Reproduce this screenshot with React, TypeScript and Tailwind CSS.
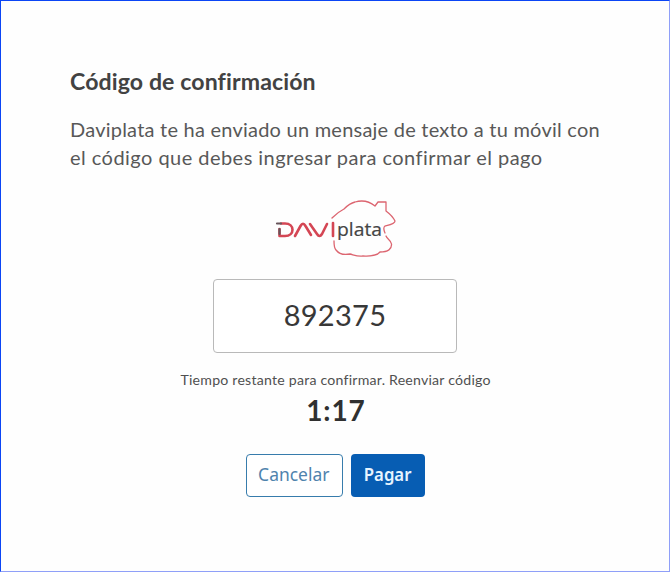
import React, { useState } from 'react';

const DaviplataLogo: React.FC = () => (
  <svg width="122" height="60" viewBox="274 199 122 60" fill="none" role="img" aria-label="Daviplata">
    {/* House outline */}
    <g stroke="#dc6570" strokeWidth="1.3" strokeLinejoin="round" strokeLinecap="round">
      <path d="M332 218C336 214 340 211 344 209C348 205 351 203 355 202C362 200 369 201 375 206L378 202H386V211C390 214 393 217 395 221C395 224 389 225 385 226C383 227 384 231 385 233" />
      <path d="M386 236C387 239 391 240 391.500 244C392 249 388 252 380 252C376 257 368 256 363 256C358 257 354 255 350 254C345 255 339 254 336 250C334 248 334 245 334 241" />
    </g>
    {/* DAVI strokes */}
    <g stroke="#d44654" strokeWidth="2.6" strokeLinecap="round" strokeLinejoin="round">
      <path d="M281 223.5H285C295 223.5 295 236 285 236H279.500V229" />
      <path d="M295 236L300.500 226Q303 221.500 305.500 226L311 235" />
      <path d="M310 224L317 234Q319.500 238 322 234L327 224" />
      <path d="M333 223V236" />
    </g>
    <path d="M277 223.5H281M279.500 229V234" stroke="#67545a" strokeWidth="2.2" strokeLinecap="round" />
    <text x="337" y="236" fill="#454545" stroke="#454545" strokeWidth="0.2" fontSize="19" textLength="45" lengthAdjust="spacingAndGlyphs" fontFamily="'Open Sans', sans-serif">
      plata
    </text>
  </svg>
);

const App: React.FC = () => {
  const [code, setCode] = useState('892375');

  return (
    <main className="h-[572px] w-[670px] overflow-hidden border border-t-[#0b45f5] border-l-[#0b45f5] border-r-[#8f9ff8] border-b-[#8f9ff8] bg-[#fefefe] pt-[67px] font-['Lato',sans-serif] text-[#424242]">
      <div className="pl-[69px]">
        <h1 className="origin-left scale-x-[1.05] whitespace-nowrap text-[22px] leading-[28px] font-bold tracking-[0.1px]">Código de confirmación</h1>
        <p className="mt-[19px] whitespace-nowrap text-[20px] leading-[28px] text-[#585858]">
          <span className="block tracking-[0.23px]">Daviplata te ha enviado un mensaje de texto a tu móvil con</span>
          <span className="block tracking-[0.46px]">el código que debes ingresar para confirmar el pago</span>
        </p>
      </div>

      <div className="flex flex-col items-center">
        <div className="mt-[28px]">
          <DaviplataLogo />
        </div>
        <input
          aria-label="Código"
          value={code}
          onChange={e => setCode(e.target.value)}
          className="mt-[20px] h-[74px] w-[244px] rounded-[4px] border border-[#b9b9b9] bg-white pb-[4px] text-center text-[29px] tracking-[0.3px] text-[#383838]"
        />
        <p className="mt-[17px] ml-px scale-x-[1.088] whitespace-nowrap text-[13px] leading-[20px] tracking-[0.2px] text-[#505050]">
          Tiempo restante para confirmar. Reenviar código
        </p>
        <p className="mt-[3px] ml-[2px] text-[28px] leading-[34px] font-bold tracking-[0.9px] text-[#303030]">1:17</p>

        {/* Actions */}
        <div className="mt-[27px] flex gap-[8px] font-['Noto_Sans',sans-serif] text-[18px]">
          <button className="h-[43px] w-[97px] rounded-[4px] border border-[#377cac] bg-white pb-[2px] text-[#4f83ad]">
            <span className="inline-block scale-x-[0.97]">Cancelar</span>
          </button>
          <button className="h-[43px] w-[74px] rounded-[4px] bg-[#075db3] pb-[2px] font-semibold text-[#e7f4ff]">
            <span className="inline-block scale-x-[0.93]">Pagar</span>
          </button>
        </div>
      </div>
    </main>
  );
};

export default App;
